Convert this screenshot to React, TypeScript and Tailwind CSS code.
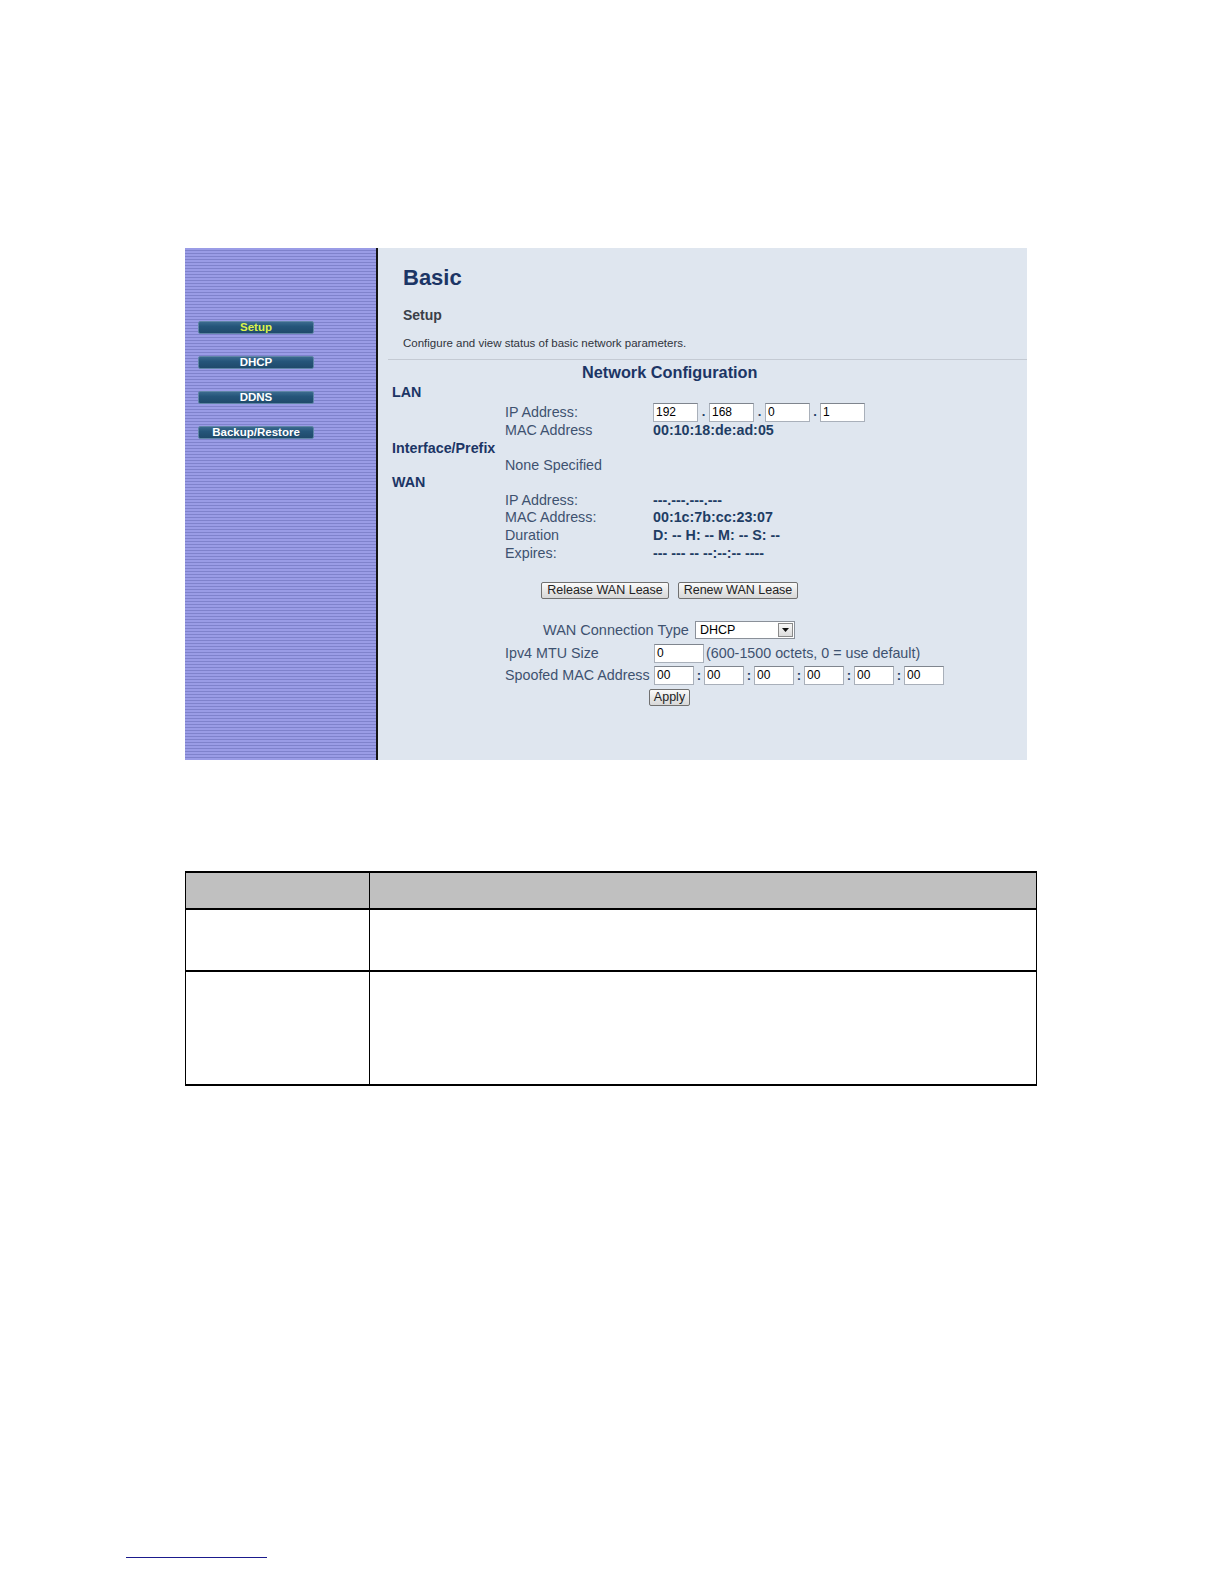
import React from "react";

const F = { fontFamily: '"Liberation Sans", Arial, sans-serif' };

function NavBtn({ label, active }: { label: string; active?: boolean }) {
  return (
    <div
      className={`w-[116px] h-[13px] rounded-[2px] bg-[linear-gradient(180deg,#3a6a8e_0%,#25557a_40%,#1f4a6b_100%)] border border-[#5f85a6] flex items-center justify-center text-[11.5px] font-bold leading-none ${
        active ? "text-[#dcf24a]" : "text-white"
      }`}
    >
      {label}
    </div>
  );
}

function TextBox({ value, w }: { value: string; w: string }) {
  return (
    <div
      className={`${w} h-[19px] bg-white border border-[#a9b0ba] border-t-[#7f858e] flex items-center pl-[2px] text-[12px] text-black leading-none`}
    >
      {value}
    </div>
  );
}

function Row({ h, label, value, children }: { h: string; label: string; value?: string; children?: React.ReactNode }) {
  return (
    <div className={`${h} flex items-center pl-[127px]`}>
      <div className="w-[148px] text-[14.3px] text-[#3e5270] leading-none">{label}</div>
      {value !== undefined && (
        <div className="text-[14.3px] font-bold text-[#1e3d64] leading-none">{value}</div>
      )}
      {children}
    </div>
  );
}

function Head({ h, label }: { h: string; label: string }) {
  return (
    <div className={`${h} flex items-center pl-[14px] text-[14.3px] font-bold text-[#1c3565] leading-none`}>
      {label}
    </div>
  );
}

function Btn({ label, w }: { label: string; w: string }) {
  return (
    <div
      className={`${w} h-[17px] rounded-[2px] border border-[#707070] bg-[linear-gradient(180deg,#fbfbfb_0%,#e8e8e8_50%,#d8d8d8_100%)] flex items-center justify-center text-[12.5px] text-[#222] leading-none`}
    >
      {label}
    </div>
  );
}

export default function App() {
  return (
    <div className="relative w-[1224px] h-[1584px] bg-white" style={F}>
      <div className="pt-[248px] pl-[185px]">
        {/* screenshot frame */}
        <div className="w-[842px] h-[512px] flex">
          <div className="w-[191px] h-full bg-[repeating-linear-gradient(180deg,#9a9ce6_0px,#9a9ce6_2px,#7f82cc_2px,#7f82cc_3px)] pt-[73px] pl-[13px] flex flex-col gap-[22px]">
            <NavBtn label="Setup" active />
            <NavBtn label="DHCP" />
            <NavBtn label="DDNS" />
            <NavBtn label="Backup/Restore" />
          </div>
          <div className="w-[2px] h-full bg-[#141414]" />
          <div className="flex-1 h-full bg-[#dfe6ef] flex flex-col">
            <div className="pt-[17px] pl-[25px]">
              <div className="text-[22px] font-bold text-[#1c3565] leading-[26px]">Basic</div>
              <div className="mt-[15px] text-[14px] font-bold text-[#3b3f48] leading-[18px]">Setup</div>
              <div className="mt-[12px] text-[11.5px] text-[#30343c] leading-[14px]">
                Configure and view status of basic network parameters.
              </div>
            </div>
            <div className="mt-[9px] ml-[10px] h-px bg-[#c4cad3]" />
            <div className="mt-[2px] h-[20px] flex items-center pl-[204px] text-[16.3px] font-bold text-[#1c3565] leading-none">
              Network Configuration
            </div>
            <Head h="h-[20px]" label="LAN" />
            <Row h="h-[20px]" label="IP Address:">
              <div className="flex items-center">
                <TextBox value="192" w="w-[45px]" />
                <span className="w-[11px] text-center text-[13px] font-bold text-[#1e3d64]">.</span>
                <TextBox value="168" w="w-[45px]" />
                <span className="w-[11px] text-center text-[13px] font-bold text-[#1e3d64]">.</span>
                <TextBox value="0" w="w-[45px]" />
                <span className="w-[10px] text-center text-[13px] font-bold text-[#1e3d64]">.</span>
                <TextBox value="1" w="w-[45px]" />
              </div>
            </Row>
            <Row h="h-[17px]" label="MAC Address" value="00:10:18:de:ad:05" />
            <Head h="h-[18px]" label="Interface/Prefix" />
            <Row h="h-[17px]" label="None Specified" />
            <Head h="h-[17px]" label="WAN" />
            <Row h="h-[18px]" label="IP Address:" value="---.---.---.---" />
            <Row h="h-[17px]" label="MAC Address:" value="00:1c:7b:cc:23:07" />
            <Row h="h-[18px]" label="Duration" value="D: -- H: -- M: -- S: --" />
            <Row h="h-[18px]" label="Expires:" value="--- --- -- --:--:-- ----" />

            <div className="mt-[20px] pl-[163px] flex gap-[9px]">
              <Btn label="Release WAN Lease" w="w-[128px]" />
              <Btn label="Renew WAN Lease" w="w-[120px]" />
            </div>

            <div className="mt-[22px] h-[18px] flex items-center pl-[165px]">
              <span className="w-[152px] text-[14.5px] text-[#3e5270] leading-none whitespace-nowrap">WAN Connection Type</span>
              <div className="w-[100px] h-[18px] bg-white border border-[#8a9099] flex items-center">
                <span className="flex-1 pl-[4px] text-[12.5px] text-black leading-none">DHCP</span>
                <div className="w-[15px] h-[14px] mr-[1px] border border-[#8a8a8a] bg-[linear-gradient(180deg,#f8f8f8,#dcdcdc)] flex items-center justify-center">
                  <svg width="7" height="4" viewBox="0 0 7 4"><path d="M0 0h7L3.5 4z" fill="#111" /></svg>
                </div>
              </div>
            </div>
            <div className="mt-[4px] h-[20px] flex items-center pl-[127px]">
              <span className="w-[149px] text-[14.3px] text-[#3e5270] leading-none">Ipv4 MTU Size</span>
              <TextBox value="0" w="w-[50px]" />
              <span className="ml-[2px] text-[14.3px] text-[#3e5270] leading-none whitespace-nowrap">(600-1500 octets, 0 = use default)</span>
            </div>
            <div className="mt-[2px] h-[20px] flex items-center pl-[127px]">
              <span className="w-[149px] text-[14.3px] text-[#3e5270] leading-none whitespace-nowrap">Spoofed MAC Address</span>
              {[0, 1, 2, 3, 4, 5].map((i) => (
                <React.Fragment key={i}>
                  {i > 0 && <span className="w-[10px] text-center text-[13px] font-bold text-[#1e3d64] leading-none">:</span>}
                  <TextBox value="00" w="w-[40px]" />
                </React.Fragment>
              ))}
            </div>
            <div className="mt-[4px] pl-[271px]">
              <Btn label="Apply" w="w-[41px]" />
            </div>
          </div>
        </div>

        {/* table */}
        <div className="mt-[111px] w-[852px] border-t-2 border-b-2 border-x border-black">
          <div className="flex h-[37px] bg-[#c0c0c0] border-b-2 border-black">
            <div className="w-[184px] border-r border-black" />
            <div className="flex-1" />
          </div>
          <div className="flex h-[62px] border-b-2 border-black">
            <div className="w-[184px] border-r border-black" />
            <div className="flex-1" />
          </div>
          <div className="flex h-[112px]">
            <div className="w-[184px] border-r border-black" />
            <div className="flex-1" />
          </div>
        </div>
      </div>

      <div className="absolute left-[126px] top-[1557px] w-[141px] h-px bg-[#1a1a8c]" />
    </div>
  );
}
